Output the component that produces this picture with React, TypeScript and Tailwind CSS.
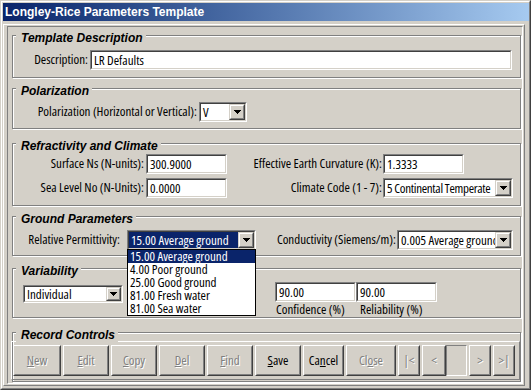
import React from 'react';

// classic win2k bevels
const sunkenOuter = 'border border-t-[#808080] border-l-[#808080] border-b-white border-r-white';
const sunkenInner = 'border border-t-[#404040] border-l-[#404040] border-b-[#d4d0c8] border-r-[#d4d0c8]';
const raisedOuter = 'border border-t-white border-l-white border-b-[#404040] border-r-[#404040]';
const raisedInner = 'border border-t-[#d4d0c8] border-l-[#d4d0c8] border-b-[#808080] border-r-[#808080]';
const heading = "font-['Liberation_Sans',Arial,sans-serif] [font-stretch:normal]";

function Arrow() {
  return (
    <svg width="7" height="4" viewBox="0 0 7 4" shapeRendering="crispEdges">
      <rect x="0" y="0" width="7" height="1" fill="#000" />
      <rect x="1" y="1" width="5" height="1" fill="#000" />
      <rect x="2" y="2" width="3" height="1" fill="#000" />
      <rect x="3" y="3" width="1" height="1" fill="#000" />
    </svg>
  );
}

function DropButton({ w = 'w-[16px]' }: { w?: string }) {
  return (
    <div className={`flex h-full shrink-0 border border-t-[#d4d0c8] border-l-[#d4d0c8] border-b-[#404040] border-r-[#404040] ${w}`}>
      <div className="flex flex-1 items-center justify-center border border-t-white border-l-white border-b-[#808080] border-r-[#808080] bg-[#d4d0c8]">
        <Arrow />
      </div>
    </div>
  );
}

function TextBox({ value, className = '' }: { value: string; className?: string }) {
  return (
    <div className={`h-[20px] shrink-0 ${sunkenOuter} ${className}`}>
      <div className={`flex h-full items-center overflow-hidden whitespace-nowrap bg-white pl-[2px] leading-[15px] ${sunkenInner}`}>
        {value}
      </div>
    </div>
  );
}

function Combo({
  value,
  className = '',
  h = 'h-[20px]',
  btn,
  text = 'pl-[2px] leading-[15px]',
  selected = false,
  children,
}: {
  value: string;
  className?: string;
  h?: string;
  btn?: string;
  text?: string;
  selected?: boolean;
  children?: React.ReactNode;
}) {
  return (
    <div className={`relative shrink-0 ${h} ${sunkenOuter} ${className}`}>
      <div className={`flex h-full bg-white ${sunkenInner}`}>
        <div
          className={`flex min-w-0 flex-1 items-center overflow-hidden whitespace-nowrap ${text} ${
            selected ? 'bg-[#0a246a] text-white' : ''
          }`}
        >
          {value}
        </div>
        <DropButton w={btn} />
      </div>
      {children}
    </div>
  );
}

function Group({ title, className = '', children }: { title: string; className?: string; children: React.ReactNode }) {
  return (
    <div className={`relative ml-[4px] mr-[1px] shrink-0 border border-[#808080] shadow-[inset_1px_1px_0_#fff,1px_1px_0_#fff] ${className}`}>
      <div className={`absolute left-[3px] top-[-5px] bg-[#d4d0c8] pl-[5px] pr-[3px] text-[12px] font-bold italic leading-[14px] text-black ${heading}`}>
        {title}
      </div>
      {children}
    </div>
  );
}

function Btn({ w, disabled, children }: { w: string; disabled?: boolean; children: React.ReactNode }) {
  return (
    <div className={`h-[31px] shrink-0 ${raisedOuter} ${w}`}>
      <div
        className={`flex h-full items-center justify-center ${raisedInner} ${
          disabled ? 'text-[#808080] [text-shadow:1px_1px_0_#fff]' : 'text-black'
        }`}
      >
        {children}
      </div>
    </div>
  );
}

const permittivity = ['15.00 Average ground', '4.00 Poor ground', '25.00 Good ground', '81.00 Fresh water', '81.00 Sea water'];

export default function App() {
  return (
    <div className="h-[390px] w-[531px] overflow-hidden border border-t-[#d4d0c8] border-l-[#d4d0c8] border-b-[#404040] border-r-[#404040] font-['Open_Sans',sans-serif] text-[13px] text-black [font-stretch:75%]">
      <div className="flex h-full flex-col border border-t-white border-l-white border-b-[#808080] border-r-[#808080] bg-[#d4d0c8] pb-[1px] pl-[1px] pt-[1px]">
        {/* title bar */}
        <div className={`flex h-[18px] shrink-0 items-center bg-linear-to-r from-[#0a246a] to-[#a6caf0] pl-[2px] text-[12px] font-bold leading-[14px] text-white ${heading}`}>
          Longley-Rice Parameters Template
        </div>

        <div className="mb-[1px] mr-[4px] mt-[3px] flex flex-1 flex-col border border-t-white border-l-white border-b-[#808080] border-r-[#808080]">
          <div className={`mb-[1px] ml-[3px] mr-[1px] mt-[1px] flex flex-1 flex-col ${sunkenOuter}`}>
            {/* Template Description */}
            <Group title="Template Description" className="mt-[8px] h-[43px] pt-[14px]">
              <div className="flex items-center">
                <div className="w-[75px] text-right">Description:</div>
                <TextBox value="LR Defaults" className="ml-[2px] w-[422px]" />
              </div>
            </Group>

            {/* Polarization */}
            <Group title="Polarization" className="mt-[10px] h-[41px] pt-[13px]">
              <div className="flex items-center">
                <div className="w-[184px] whitespace-nowrap text-right">Polarization (Horizontal or Vertical):</div>
                <Combo value="V" className="ml-[2px] w-[48px]" />
              </div>
            </Group>

            {/* Refractivity and Climate */}
            <Group title="Refractivity and Climate" className="mt-[14px] h-[63px] pt-[10px]">
              <div className="flex items-center">
                <div className="w-[131px] whitespace-nowrap text-right">Surface Ns (N-units):</div>
                <TextBox value="300.9000" className="ml-[2px] w-[81px]" />
                <div className="w-[155px] whitespace-nowrap text-right">Effective Earth Curvature (K):</div>
                <TextBox value="1.3333" className="ml-[1px] w-[81px]" />
              </div>
              <div className="mt-[4px] flex items-center">
                <div className="w-[131px] whitespace-nowrap text-right">Sea Level No (N-Units):</div>
                <TextBox value="0.0000" className="ml-[2px] w-[81px]" />
                <div className="w-[155px] whitespace-nowrap text-right">Climate Code (1 - 7):</div>
                <Combo value="5 Continental Temperate" text="pl-[2px] leading-[15px] tracking-[-0.3px]" className="ml-[1px] w-[130px]" />
              </div>
            </Group>

            {/* Ground Parameters */}
            <Group title="Ground Parameters" className="z-10 mt-[10px] h-[40px] pt-[13px]">
              <div className="flex items-center">
                <div className="w-[107px] whitespace-nowrap text-right">Relative Permittivity:</div>
                <Combo value="15.00 Average ground" selected className="ml-[7px] w-[129px]">
                  <div className="absolute left-[-1px] top-full z-20 w-[129px] border border-black bg-white">
                    {permittivity.map((p, i) => (
                      <div
                        key={p}
                        className={`h-[13px] whitespace-nowrap pl-[2px] leading-[13px] ${i === 0 ? 'bg-[#0a246a] text-white' : ''}`}
                      >
                        {p}
                      </div>
                    ))}
                  </div>
                </Combo>
                <div className="w-[140px] whitespace-nowrap text-right">Conductivity (Siemens/m):</div>
                <Combo value="0.005 Average ground" className="ml-[1px] w-[116px]" />
              </div>
            </Group>

            {/* Variability */}
            <Group title="Variability" className="mt-[12px] h-[50px] pt-[13px]">
              <div className="flex items-start">
                <Combo
                  value="Individual"
                  h="h-[18px]"
                  btn="w-[15px]"
                  text="pl-[2px] leading-[13px]"
                  className="ml-[10px] mt-[3px] w-[100px]"
                />
                <div className="ml-[152px] flex flex-col">
                  <TextBox value="90.00" className="w-[81px]" />
                  <div className="pl-[1px] leading-[15px]">Confidence (%)</div>
                </div>
                <div className="flex flex-col">
                  <TextBox value="90.00" className="w-[81px]" />
                  <div className="pl-[4px] leading-[15px]">Reliability (%)</div>
                </div>
              </div>
            </Group>

            {/* Record Controls */}
            <Group title="Record Controls" className="mt-[14px] h-[50px] pt-[8px]">
              <div className="ml-[-2px] flex h-[39px] w-[509px] gap-[2px] border border-t-white border-l-white border-b-[#808080] border-r-[#808080] pl-[1px] pt-[3px]">
                <Btn w="w-[48px]" disabled><span><span className="underline">N</span>ew</span></Btn>
                <Btn w="w-[46px]" disabled><span><span className="underline">E</span>dit</span></Btn>
                <Btn w="w-[46px]" disabled><span><span className="underline">C</span>opy</span></Btn>
                <Btn w="w-[46px]" disabled><span><span className="underline">D</span>el</span></Btn>
                <Btn w="w-[46px]" disabled><span><span className="underline">F</span>ind</span></Btn>
                <Btn w="w-[46px]"><span><span className="underline">S</span>ave</span></Btn>
                <Btn w="w-[41px]">
                  <span>
                    Ca<span className="underline">n</span>cel
                  </span>
                </Btn>
                <Btn w="w-[50px]" disabled>
                  <span>
                    Cl<span className="underline">o</span>se
                  </span>
                </Btn>
                <Btn w="w-[22px]" disabled>|&lt;</Btn>
                <Btn w="w-[24px]" disabled>&lt;</Btn>
                <div className="ml-[-2px] h-[31px] w-[21px] shrink-0 border border-t-[#808080] border-l-[#808080] border-b-white border-r-white" />
                <Btn w="w-[22px]" disabled>&gt;</Btn>
                <Btn w="w-[22px]" disabled>&gt;|</Btn>
              </div>
            </Group>
          </div>
        </div>
      </div>
    </div>
  );
}
